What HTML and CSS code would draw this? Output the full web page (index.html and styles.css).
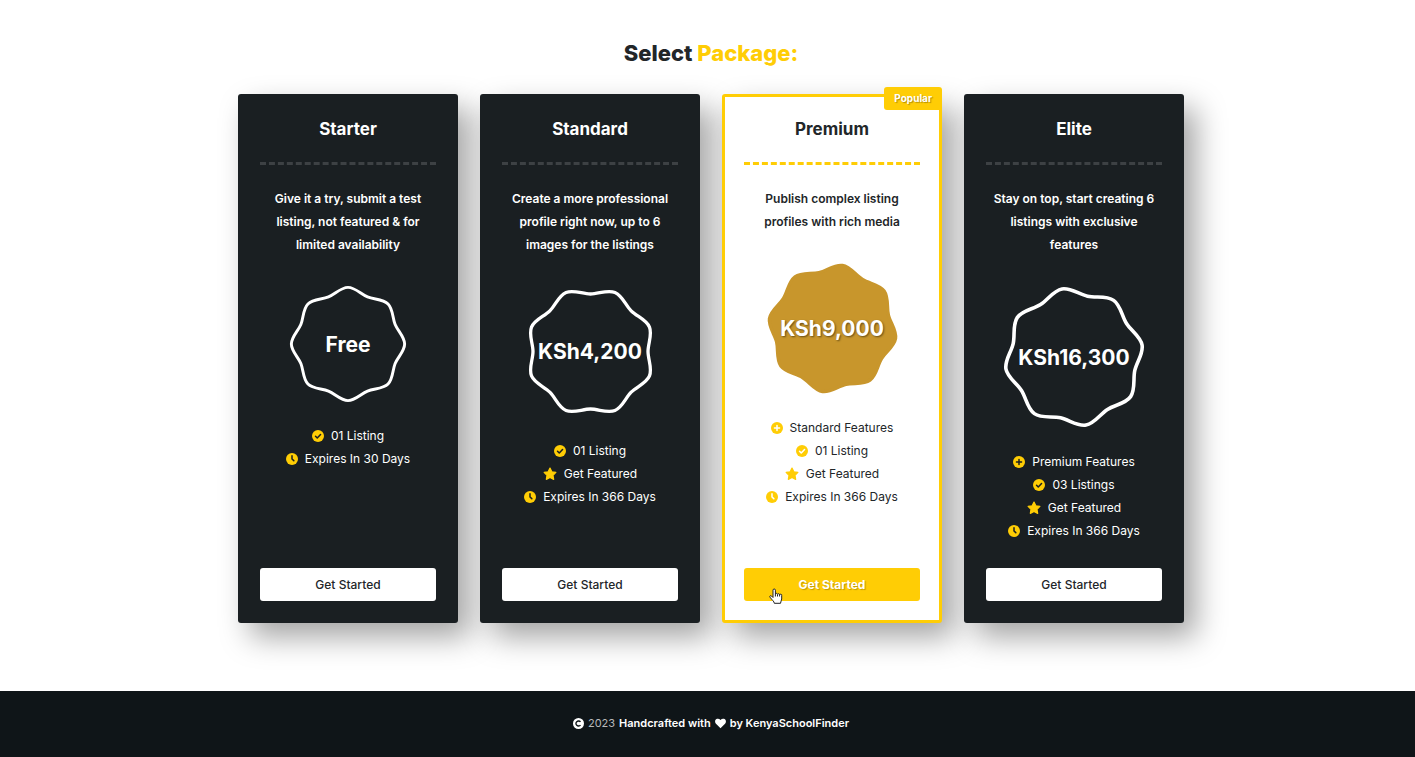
FILE: index.html
```html
<!DOCTYPE html>
<html lang="en">
<head>
<meta charset="utf-8">
<meta name="viewport" content="width=device-width, initial-scale=1">
<title>Select Package</title>
<link rel="stylesheet" href="styles.css">
</head>
<body>
<svg class="sprite" aria-hidden="true">
  <symbol id="badge" viewBox="-100 -100 200 200">
    <path d="M0-96C12-96 22-84.500 33.100-79.900S59.390-76.370 67.880-67.880 75.310-44.190 79.900-33.100 96-12 96 0 84.500 22 79.900 33.100 76.370 59.390 67.880 67.880 44.190 75.310 33.100 79.900 12 96 0 96-22 84.500-33.100 79.900-59.390 76.370-67.880 67.880-75.310 44.190-79.900 33.100-96 12-96 0-84.500-22-79.900-33.100-76.370-59.390-67.880-67.880-44.190-75.310-33.100-79.900-12-96 0-96Z"/>
  </symbol>
  <symbol id="check" viewBox="0 0 16 16"><circle cx="8" cy="8" r="8" fill="currentColor"/><path class="cut" d="M4.700 8.300l2.300 2.300 4.400-4.700"/></symbol>
  <symbol id="clock" viewBox="0 0 16 16"><circle cx="8" cy="8" r="8" fill="currentColor"/><path class="cut" d="M8 3.800V8l2.400 2.200"/></symbol>
  <symbol id="plus" viewBox="0 0 16 16"><circle cx="8" cy="8" r="8" fill="currentColor"/><path class="cut" d="M8 4.600v6.800M4.600 8h6.800"/></symbol>
  <symbol id="star" viewBox="0 0 16 16"><path d="M8 1.300l2.100 4.200 4.600.7-3.300 3.300.8 4.600L8 11.900l-4.200 2.200.8-4.600-3.300-3.300 4.600-.7z" fill="currentColor" stroke="currentColor" stroke-width="1.400" stroke-linejoin="round"/></symbol>
</svg>

<main class="packages">
  <h1 class="title">Select <span class="accent">Package:</span></h1>
  <div class="plans">
    <section class="plan">
      <h2 class="name">Starter</h2>
      <hr class="divider">
      <p class="summary">Give it a try, submit a test listing, not featured &amp; for limited availability</p>
      <div class="price price-s"><svg><use href="#badge"/></svg><span>Free</span></div>
      <ul class="features">
        <li><svg class="icon"><use href="#check"/></svg>01 Listing</li>
        <li><svg class="icon"><use href="#clock"/></svg>Expires In 30 Days</li>
      </ul>
      <button class="start" type="button">Get Started</button>
    </section>
    <section class="plan">
      <h2 class="name">Standard</h2>
      <hr class="divider">
      <p class="summary">Create a more professional profile right now, up to 6 images for the listings</p>
      <div class="price price-m"><svg class="turn-half"><use href="#badge"/></svg><span>KSh4,200</span></div>
      <ul class="features">
        <li><svg class="icon"><use href="#check"/></svg>01 Listing</li>
        <li><svg class="icon star"><use href="#star"/></svg>Get Featured</li>
        <li><svg class="icon"><use href="#clock"/></svg>Expires In 366 Days</li>
      </ul>
      <button class="start" type="button">Get Started</button>
    </section>
    <section class="plan plan-popular">
      <span class="tag">Popular</span>
      <h2 class="name">Premium</h2>
      <hr class="divider">
      <p class="summary">Publish complex listing profiles with rich media</p>
      <div class="price price-m"><svg class="turn-right"><use href="#badge"/></svg><span>KSh9,000</span></div>
      <ul class="features">
        <li><svg class="icon"><use href="#plus"/></svg>Standard Features</li>
        <li><svg class="icon"><use href="#check"/></svg>01 Listing</li>
        <li><svg class="icon star"><use href="#star"/></svg>Get Featured</li>
        <li><svg class="icon"><use href="#clock"/></svg>Expires In 366 Days</li>
      </ul>
      <button class="start" type="button">Get Started
        <svg class="pointer" viewBox="0 0 14 16" aria-hidden="true"><path d="M4 9.500V2.200a1.200 1.200 0 0 1 2.400 0V6a1.100 1.100 0 0 1 2.100.4 1.100 1.100 0 0 1 2.100.5 1.100 1.100 0 0 1 2.100.7V11c0 1.500-1.200 2.500-1.200 4.300H5.300C5.300 13.500 3 12 1 9.200c-.8-1.300.7-2 1.500-1.200z" fill="#fff" stroke="#222" stroke-linejoin="round"/><path d="M6.400 6v2.500M8.500 6.500v2M10.600 7v1.500" stroke="#222" fill="none"/></svg>
      </button>
    </section>
    <section class="plan">
      <h2 class="name">Elite</h2>
      <hr class="divider">
      <p class="summary">Stay on top, start creating 6 listings with exclusive features</p>
      <div class="price price-l"><svg class="turn-left"><use href="#badge"/></svg><span>KSh16,300</span></div>
      <ul class="features">
        <li><svg class="icon"><use href="#plus"/></svg>Premium Features</li>
        <li><svg class="icon"><use href="#check"/></svg>03 Listings</li>
        <li><svg class="icon star"><use href="#star"/></svg>Get Featured</li>
        <li><svg class="icon"><use href="#clock"/></svg>Expires In 366 Days</li>
      </ul>
      <button class="start" type="button">Get Started</button>
    </section>
  </div>
</main>

<footer class="footer">
  <svg class="foot-icon" viewBox="0 0 16 16"><circle cx="8" cy="8" r="8" fill="#fff"/><path d="M10.900 10.300a3.700 3.700 0 1 1 0-4.600" fill="none" stroke="#0f1518" stroke-width="2"/></svg>
  <span class="year">2023</span>
  <strong>Handcrafted with</strong>
  <svg class="foot-icon" viewBox="0 0 16 16"><path d="M8 15L1.400 8.300C-.5 6.200-.3 3 2 1.600c2-1.200 4.300-.7 6 1.200 1.700-1.900 4-2.400 6-1.200 2.300 1.400 2.500 4.600.6 6.700z" fill="#fff"/></svg>
  <strong>by KenyaSchoolFinder</strong>
</footer>
</body>
</html>
```
FILE: styles.css
```css
* { box-sizing: border-box; }

body {
  margin: 0;
  min-height: 100vh;
  display: flex;
  flex-direction: column;
  background: #fff;
  color: #222629;
  font: 400 12px/23px Inter, "Liberation Sans", sans-serif;
}

.sprite { display: none; }

.packages {
  flex: 1;
  padding: 39px 16px 67px 23px;
}

.title {
  margin: 0 0 27px;
  font-size: 22px;
  line-height: 28px;
  font-weight: 800;
  text-align: center;
}

.accent { color: #ffcd05; }

.plans {
  display: grid;
  grid-template-columns: repeat(auto-fit, minmax(200px, 1fr));
  gap: 22px;
  max-width: 946px;
  margin: 0 auto;
}

.plan {
  --surface: #1a1f22;
  position: relative;
  display: flex;
  flex-direction: column;
  align-items: center;
  padding: 22px;
  border-radius: 3px;
  background: var(--surface);
  color: #fff;
  box-shadow: 12px 14px 30px rgba(0, 0, 0, 0.36);
}

.plan-popular {
  --surface: #fff;
  padding: 19px;
  border: 3px solid #ffcd05;
  color: #222629;
}

.tag {
  position: absolute;
  top: -10px;
  right: -3px;
  padding: 0 10px;
  border-radius: 3px;
  background: #ffcd05;
  color: #fff;
  font-size: 10px;
  font-weight: 700;
  text-shadow: 1px 1px 1px rgba(0, 0, 0, 0.3);
}

.name {
  margin: 0;
  font-size: 17px;
  line-height: 27px;
  font-weight: 700;
}

.divider {
  width: 100%;
  margin: 19px 0 22px;
  border: 0;
  border-top: 3px dashed #3d4144;
}

.plan-popular .divider { border-color: #ffcd05; }

.summary {
  margin: 0 0 29px;
  padding: 0 4px;
  font-weight: 600;
  text-align: center;
}

.price {
  display: grid;
  place-items: center;
  margin-bottom: 21px;
  font-size: 21px;
  font-weight: 700;
}

.price > * { grid-area: 1 / 1; }

.price svg {
  width: 100%;
  height: 100%;
  fill: none;
  stroke: #fff;
  stroke-width: 5px;
}

.price span { z-index: 1; }
.price-s { width: 118px; height: 118px; }
.price-m { width: 133px; height: 133px; }
.price-l { width: 144px; height: 144px; }
.turn-half { transform: rotate(22.5deg); }
.turn-right { transform: rotate(9deg); }
.turn-left { transform: rotate(-10deg); }

.plan-popular .price {
  color: #fff;
  text-shadow: 1px 1px 2px rgba(0, 0, 0, 0.5);
}

.plan-popular .price svg {
  fill: #c8962c;
  stroke: #c8962c;
}

.features {
  margin: 0 0 26px;
  padding: 0;
  list-style: none;
}

.features li {
  display: flex;
  align-items: center;
  justify-content: center;
  gap: 7px;
}

.icon {
  width: 12px;
  height: 12px;
  color: #ffcd05;
}

.star { width: 14px; height: 14px; }

.cut {
  fill: none;
  stroke: var(--surface);
  stroke-width: 2px;
  stroke-linecap: round;
  stroke-linejoin: round;
}

.start {
  position: relative;
  width: 100%;
  margin-top: auto;
  padding: 5px;
  border: 0;
  border-radius: 3px;
  background: #fff;
  color: #222629;
  font: inherit;
  font-weight: 500;
  cursor: pointer;
}

.plan-popular .start {
  background: #ffcd05;
  color: #fff;
  font-weight: 700;
  text-shadow: 1px 1px 1px rgba(0, 0, 0, 0.25);
}

.pointer {
  position: absolute;
  left: 25px;
  top: 20px;
  width: 14px;
  height: 16px;
}

.footer {
  display: flex;
  flex-wrap: wrap;
  align-items: center;
  justify-content: center;
  gap: 4px;
  padding: 21px 16px 22px 23px;
  background: #0f1518;
  color: #fff;
  font-size: 11px;
}

.footer strong { font-weight: 600; }
.year { color: #b7b9ba; }
.foot-icon { width: 11px; height: 11px; }
```
